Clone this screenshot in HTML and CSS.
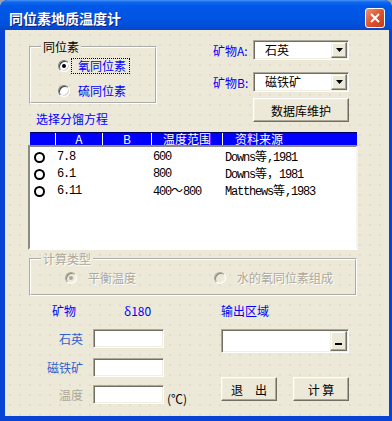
FILE: index.html
```html
<!DOCTYPE html>
<html lang="zh-CN">
<head>
    <meta charset="UTF-8">
    <meta name="viewport" content="width=device-width, initial-scale=1.0">
    <title>同位素地质温度计</title>
    <link rel="stylesheet" href="styles.css">
</head>
<body>
    <div class="window">
        <div class="titlebar">
            <span class="title">同位素地质温度计</span>
            <span class="close-btn">
                <svg width="10" height="10" viewBox="0 0 10 10"><path d="M1 1L9 9M9 1L1 9" stroke="#fff" stroke-width="2"/></svg>
            </span>
        </div>

        <div class="client">
            <div class="top-row">
                <div class="top-left">
                    <fieldset class="group iso-group">
                        <legend>同位素</legend>
                        <div class="group-body">
                            <div class="radio-row">
                                <span class="radio checked"></span>
                                <span class="radio-label focus">氧同位素</span>
                            </div>
                            <div class="radio-row">
                                <span class="radio"></span>
                                <span class="radio-label">硫同位素</span>
                            </div>
                        </div>
                    </fieldset>
                    <div class="section-title">选择分馏方程</div>
                </div>

                <div class="top-right">
                    <div class="field-row">
                        <span class="field-label">矿物A:</span>
                        <div class="combo mineral-combo">
                            <span class="combo-text">石英</span>
                            <span class="combo-btn">
                                <svg width="7" height="4" viewBox="0 0 7 4"><path d="M0 0H7L3.5 4Z" fill="#000"/></svg>
                            </span>
                        </div>
                    </div>
                    <div class="field-row second">
                        <span class="field-label">矿物B:</span>
                        <div class="combo mineral-combo">
                            <span class="combo-text">磁铁矿</span>
                            <span class="combo-btn">
                                <svg width="7" height="4" viewBox="0 0 7 4"><path d="M0 0H7L3.5 4Z" fill="#000"/></svg>
                            </span>
                        </div>
                    </div>
                    <button class="btn db-btn">数据库维护</button>
                </div>
            </div>

            <div class="list-head">
                <span class="col"></span>
                <span class="col">A</span>
                <span class="col">B</span>
                <span class="col">温度范围</span>
                <span class="col source">资料来源</span>
            </div>
            <div class="list-body">
                <div class="list-row">
                    <span class="cell"><span class="pick"></span></span>
                    <span class="cell">7.8</span>
                    <span class="cell"></span>
                    <span class="cell">600</span>
                    <span class="cell source">Downs<span class="wide">等</span>,1981</span>
                </div>
                <div class="list-row">
                    <span class="cell"><span class="pick"></span></span>
                    <span class="cell">6.1</span>
                    <span class="cell"></span>
                    <span class="cell">800</span>
                    <span class="cell source">Downs<span class="wide">等</span><span class="wide comma">，</span>1981</span>
                </div>
                <div class="list-row">
                    <span class="cell"><span class="pick"></span></span>
                    <span class="cell">6.11</span>
                    <span class="cell"></span>
                    <span class="cell">400<span class="wide">～</span>800</span>
                    <span class="cell source">Matthews<span class="wide">等</span>,1983</span>
                </div>
            </div>

            <fieldset class="group calc-group">
                <legend>计算类型</legend>
                <div class="group-body calc-row">
                    <div class="calc-item first">
                        <span class="radio off checked"></span>
                        <span class="radio-label off">平衡温度</span>
                    </div>
                    <div class="calc-item">
                        <span class="radio off"></span>
                        <span class="radio-label off">水的氧同位素组成</span>
                    </div>
                </div>
            </fieldset>

            <div class="bottom">
                <div class="heads">
                    <span class="head-mineral">矿物</span>
                    <span class="head-delta">δ180</span>
                    <span>输出区域</span>
                </div>
                <div class="lower">
                    <div class="inputs">
                        <div class="input-row">
                            <span class="in-label">石英</span>
                            <input class="textbox" type="text">
                        </div>
                        <div class="input-row">
                            <span class="in-label">磁铁矿</span>
                            <input class="textbox" type="text">
                        </div>
                        <div class="input-row">
                            <span class="in-label off">温度</span>
                            <input class="textbox" type="text">
                            <span class="unit">(℃)</span>
                        </div>
                    </div>
                    <div class="outputs">
                        <div class="combo out-combo">
                            <span class="combo-text"></span>
                            <span class="combo-btn"><span class="bar"></span></span>
                        </div>
                        <div class="actions">
                            <button class="btn act-btn">退　出</button>
                            <button class="btn act-btn">计 算</button>
                        </div>
                    </div>
                </div>
            </div>
        </div>
    </div>
</body>
</html>
```

FILE: styles.css
```css
* {
    box-sizing: border-box;
}

html, body {
    margin: 0;
    padding: 0;
}

body {
    background: #98a1b4;
    font-family: "Noto Sans CJK SC", sans-serif;
    font-size: 12px;
    color: #000;
}

.window {
    width: 392px;
    height: 421px;
    background: #0843d6;
    border-radius: 8px 8px 0 0;
    display: flex;
    flex-direction: column;
    overflow: hidden;
}

.titlebar {
    height: 30px;
    flex: none;
    display: flex;
    align-items: flex-start;
    justify-content: space-between;
    padding: 8px 7px 0 9px;
    background: linear-gradient(#4a94f8 0px, #1069ee 2px, #0058e8 6px, #0055e3 18px, #004ed8 26px, #0a46c8 30px);
}

.title {
    color: #fff;
    font-weight: bold;
    font-size: 14px;
    line-height: 20px;
    text-shadow: 1px 1px 0 #0f1f7a;
}

.close-btn {
    width: 20px;
    height: 20px;
    border: 1px solid #fff;
    border-radius: 3px;
    background: linear-gradient(135deg, #f0906f, #dc5530 50%, #c23c16);
    display: flex;
    align-items: center;
    justify-content: center;
}

.client {
    flex: 1;
    margin: 0 3px 5px 5px;
    background-color: #ece9d8;
    background-image: radial-gradient(rgba(214, 160, 160, 0.28) 0.6px, transparent 1px);
    background-size: 10px 10px;
    color: #0000ff;
}

/* top area */
.top-row {
    display: flex;
    margin-top: 10px;
}

.top-left {
    margin-left: 24px;
    width: 128px;
}

.group {
    margin: 0;
    padding: 0;
    min-width: 0;
    border: 2px groove #fff;
}

.group legend {
    margin-left: 10px;
    padding: 0 2px;
    line-height: 14px;
    color: #000;
}

.iso-group {
    width: 128px;
}

.iso-group .group-body {
    padding: 3px 0 3px 27px;
}

.radio-row {
    display: flex;
    align-items: center;
    height: 17px;
}

.radio-row + .radio-row {
    margin-top: 8px;
}

.radio {
    width: 12px;
    height: 12px;
    flex: none;
    border-radius: 50%;
    background: #fff;
    border: 1px solid;
    border-color: #808080 #fff #fff #808080;
    box-shadow: inset 1px 1px 0 #404040, inset -1px -1px 0 #d4d0c8;
    display: flex;
    align-items: center;
    justify-content: center;
}

.radio.checked::after {
    content: "";
    width: 4px;
    height: 4px;
    border-radius: 50%;
    background: #000;
}

.radio.off {
    background: #ece9d8;
    border-color: #aca899 #fff #fff #aca899;
    box-shadow: inset 1px 1px 0 #8a887c, inset -1px -1px 0 #f1efe2;
}

.radio.off.checked::after {
    background: #aca899;
}

.radio-label {
    margin-left: 1px;
    padding: 0 3px 0 6px;
    line-height: 14px;
    border: 1px dotted transparent;
}

.radio-label.focus {
    border-color: #000;
}

.radio-label.off {
    color: #aca899;
    text-shadow: 1px 1px 0 #fff;
}

.section-title {
    margin: 8px 0 0 7px;
    line-height: 14px;
    white-space: nowrap;
}

.top-right {
    margin-left: 56px;
}

.field-row {
    display: flex;
    align-items: center;
}

.field-row.second {
    margin-top: 12px;
}

.field-label {
    width: 40px;
}

.combo {
    display: flex;
    background: #fff;
    border: 1px solid;
    border-color: #aca899 #fff #fff #aca899;
    box-shadow: inset 1px 1px 0 #716f64, inset -1px -1px 0 #f1efe2;
    padding: 1px;
}

.mineral-combo {
    width: 96px;
    height: 20px;
}

.combo-text {
    flex: 1;
    padding-left: 10px;
    line-height: 16px;
    color: #000;
}

.combo-btn {
    width: 16px;
    flex: none;
    background: #ece9d8;
    border: 1px solid;
    border-color: #f1efe2 #716f64 #716f64 #f1efe2;
    box-shadow: inset -1px -1px 0 #aca899, inset 1px 1px 0 #fff;
    display: flex;
    align-items: center;
    justify-content: center;
}

.btn {
    font: inherit;
    color: #000;
    background: #ece9d8;
    border: 1px solid;
    border-color: #fff #716f64 #716f64 #fff;
    box-shadow: inset -1px -1px 0 #aca899, inset 1px 1px 0 #f1efe2;
    padding: 0;
}

.db-btn {
    display: block;
    margin: 6px 0 0 40px;
    width: 96px;
    height: 24px;
}

/* equation list */
.list-head,
.list-row {
    display: grid;
    grid-template-columns: 25px 47px 49px 71px 1fr;
}

.list-head {
    margin: 6px 0 0 25px;
    width: 327px;
    height: 13px;
    background: #0000ff;
    border-top: 1px solid #000060;
    color: #fff;
    line-height: 12px;
}

.list-head .col {
    text-align: center;
}

.list-head .col + .col {
    border-left: 1px solid #fff;
}

.list-head .col.source {
    text-align: left;
    padding-left: 12px;
}

.list-body {
    margin-left: 23px;
    width: 330px;
    height: 105px;
    background: #fff;
    border: 2px solid;
    border-color: #8d8b80 #f4f3ee #fff #8d8b80;
}

.list-row {
    height: 17px;
    align-items: center;
    color: #000;
    font-family: "Liberation Mono", "Noto Sans CJK SC", monospace;
    font-size: 12px;
    letter-spacing: -1.2px;
    white-space: nowrap;
}

.list-row .cell {
    padding-left: 2px;
    line-height: 17px;
}

.list-row .cell:first-child {
    display: flex;
    align-items: center;
    padding-left: 4px;
}

.list-row .cell.source {
    padding-left: 3px;
}

.wide {
    font-family: "Noto Sans CJK SC", sans-serif;
    letter-spacing: 0;
}

.wide.comma {
    font-family: "Noto Sans CJK TC", sans-serif;
}

.pick {
    width: 11px;
    height: 11px;
    border: 2px solid #000;
    border-radius: 50%;
    background: #fff;
}

/* calc type */
.calc-group {
    margin: 2px 0 0 24px;
    width: 328px;
}

.calc-group legend {
    color: #aca899;
    text-shadow: 1px 1px 0 #fff;
}

.calc-row {
    display: flex;
    height: 28px;
    align-items: flex-start;
    padding: 3px 0 0 34px;
}

.calc-item {
    display: flex;
    align-items: center;
    height: 17px;
}

.calc-item.first {
    width: 149px;
}

.calc-item .radio-label {
    margin-left: 4px;
}

/* bottom area */
.heads {
    display: flex;
    margin-top: 8px;
    padding-left: 47px;
    line-height: 14px;
}

.head-mineral {
    width: 72px;
}

.head-delta {
    width: 97px;
}

.lower {
    display: flex;
    margin-top: 11px;
}

.inputs {
    width: 216px;
}

.input-row {
    display: flex;
    align-items: center;
    height: 19px;
}

.input-row + .input-row {
    margin-top: 10px;
}

.input-row:last-child {
    margin-top: 8px;
}

.in-label {
    width: 78px;
    text-align: right;
    color: #2f62d0;
}

.in-label.off {
    color: #aca899;
}

.textbox {
    margin: 0 0 0 10px;
    width: 71px;
    height: 19px;
    padding: 0;
    background: #fff;
    border: 1px solid;
    border-color: #aca899 #fff #fff #aca899;
    box-shadow: inset 1px 1px 0 #716f64, inset -1px -1px 0 #f1efe2;
    outline: none;
}

.unit {
    align-self: flex-end;
    margin-left: 3px;
    line-height: 11px;
    color: #000;
}

.out-combo {
    width: 128px;
    height: 24px;
}

.out-combo .combo-btn {
    width: 17px;
    align-items: flex-end;
    padding-bottom: 5px;
}

.bar {
    width: 7px;
    height: 2px;
    background: #000;
}

.actions {
    display: flex;
    gap: 16px;
    margin-top: 24px;
}

.act-btn {
    width: 56px;
    height: 24px;
}
```
